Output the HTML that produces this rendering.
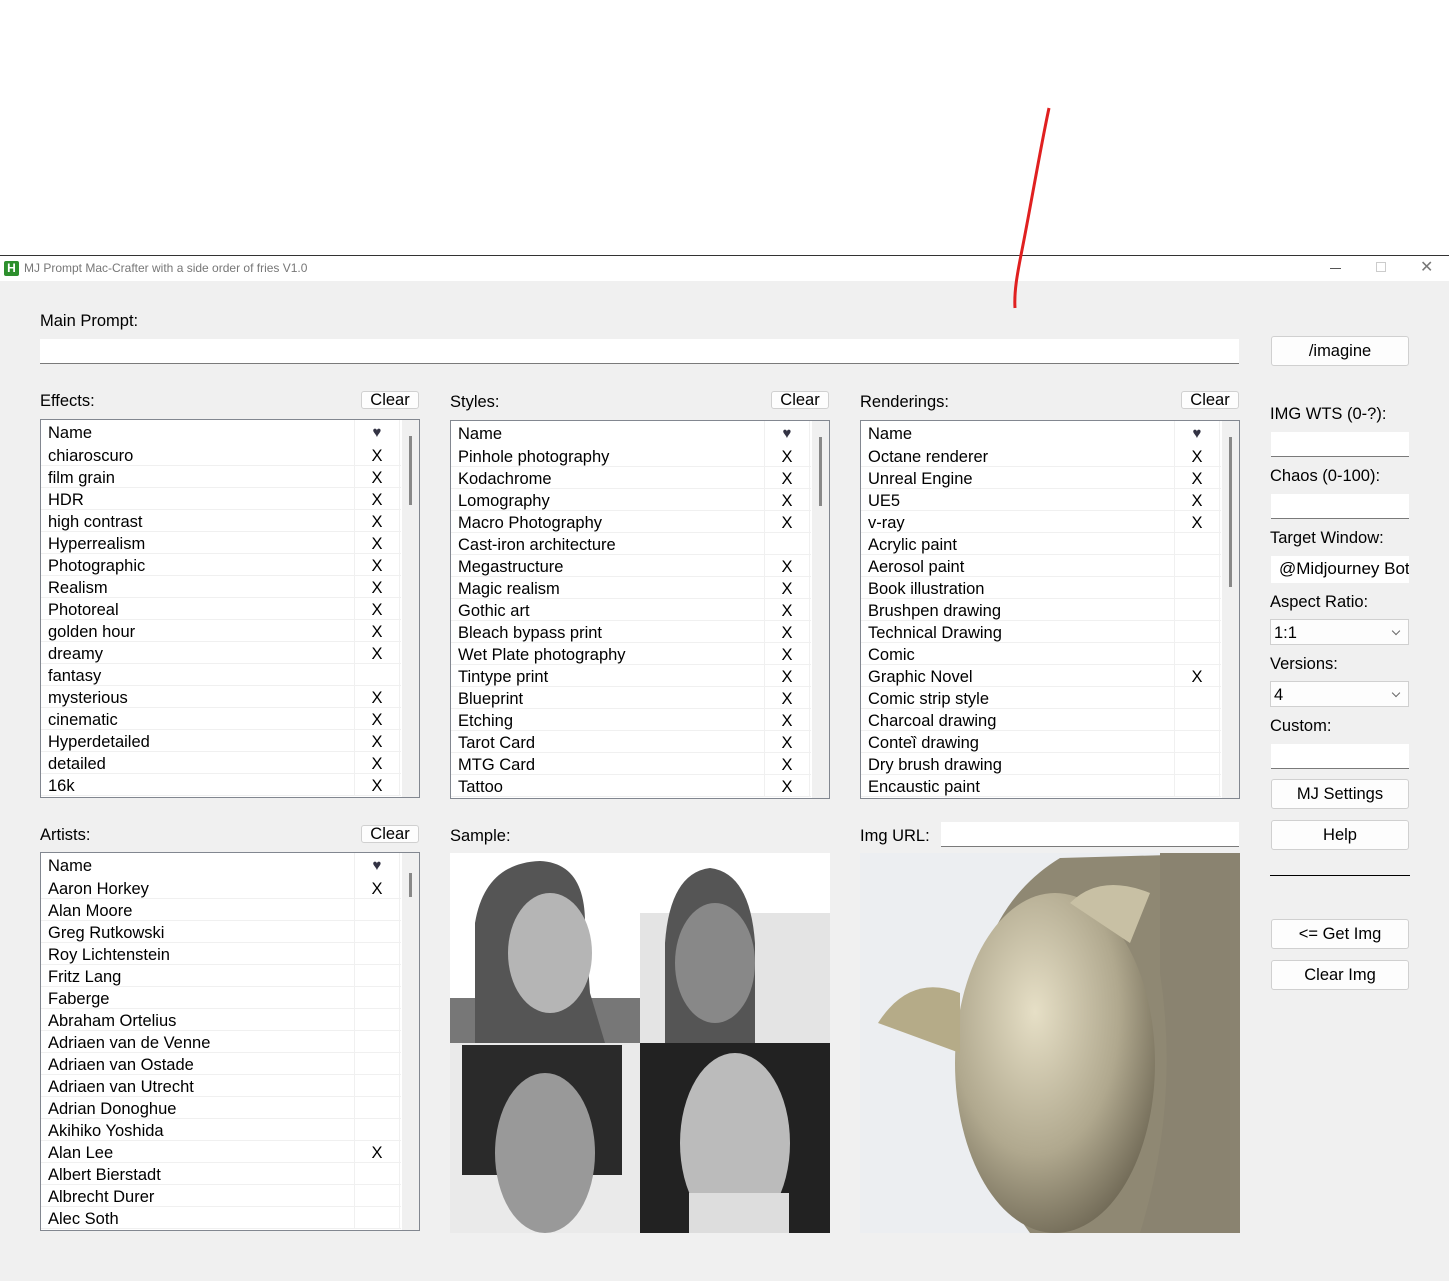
<!DOCTYPE html>
<html><head><meta charset="utf-8"><style>
*{margin:0;padding:0;box-sizing:border-box}
body{width:1449px;height:1281px;position:relative;background:#fff;font-family:"Liberation Sans",sans-serif;font-size:16.5px;color:#000;overflow:hidden}
.a{position:absolute}
.win{left:0;top:255px;width:1449px;height:1026px;border-top:1px solid #333;background:#f0f0f0}
.title{left:0;top:256px;width:1449px;height:25px;background:#fff}
.lbl{position:absolute;font-size:16.5px;line-height:20px;white-space:nowrap}
.btn{position:absolute;background:#fdfdfd;border:1px solid #d0d0d0;border-radius:3px;text-align:center;font-size:16.5px;white-space:nowrap}
.clr{height:18px;width:58px;line-height:16px}
.inp{position:absolute;background:#fff;border-bottom:1px solid #7a7a7a}
.list{position:absolute;width:380px;height:379px;border:1px solid #828790;background:#fff;overflow:hidden}
.list .sb{position:absolute;right:0;top:0;width:17px;height:100%;background:#f0f0f0}
.list .sb i{position:absolute;left:7px;top:16px;width:3px;height:69px;background:#888}
.r{display:flex;height:22px;line-height:24px;width:360px;border-bottom:1px solid #f0f0f0}
.r.h{height:24px;line-height:26px;border-bottom:none}
.n{width:314px;padding-left:7px;border-right:1px solid #f0f0f0;white-space:nowrap;overflow:hidden}
.x{width:45px;text-align:center;border-right:1px solid #f0f0f0}
.h .x{color:#334;font-size:15px}
.sel{position:absolute;background:#fdfdfd;border:1px solid #d0d0d0;height:26px;width:139px;line-height:26px;padding-left:3px}
.sel:after{content:"";position:absolute;right:9px;top:8px;width:5px;height:5px;border-right:1px solid #666;border-bottom:1px solid #666;transform:rotate(45deg)}
</style></head><body>
<div class="a win"></div>
<div class="a title"></div>
<svg class="a" style="left:0;top:0;z-index:5" width="1449" height="320"><path d="M1049 108 C1040 150 1030 210 1022 250 C1017 275 1014 292 1015 308" stroke="#e02020" stroke-width="3" fill="none"/></svg>
<div class="a" style="left:4px;top:261px;width:15px;height:15px;background:#2d8f2d;border-radius:2px;color:#fff;font-size:12px;font-weight:bold;text-align:center;line-height:15px">H</div>
<div class="lbl" style="left:24px;top:259px;font-size:12px;color:#777;line-height:18px">MJ Prompt Mac-Crafter with a side order of fries V1.0</div>
<div class="a" style="left:1330px;top:268px;width:11px;height:1px;background:#555"></div>
<div class="a" style="left:1376px;top:262px;width:10px;height:10px;border:1px solid #ccc"></div>
<div class="lbl" style="left:1420px;top:258px;font-size:16px;color:#777">✕</div>

<div class="lbl" style="left:40px;top:311px">Main Prompt:</div>
<div class="inp" style="left:40px;top:339px;width:1199px;height:25px"></div>
<div class="btn" style="left:1271px;top:336px;width:138px;height:30px;line-height:29px">/imagine</div>

<div class="lbl" style="left:40px;top:391px">Effects:</div>
<div class="btn clr" style="left:361px;top:391px">Clear</div>
<div class="lbl" style="left:450px;top:392px">Styles:</div>
<div class="btn clr" style="left:771px;top:391px">Clear</div>
<div class="lbl" style="left:860px;top:392px">Renderings:</div>
<div class="btn clr" style="left:1181px;top:391px">Clear</div>

<div class="list" style="left:40px;top:419px"><div class="sb"><i></i></div>
<div class="r h"><span class="n">Name</span><span class="x">♥</span></div>
<div class="r"><span class="n">chiaroscuro</span><span class="x">X</span></div>
<div class="r"><span class="n">film grain</span><span class="x">X</span></div>
<div class="r"><span class="n">HDR</span><span class="x">X</span></div>
<div class="r"><span class="n">high contrast</span><span class="x">X</span></div>
<div class="r"><span class="n">Hyperrealism</span><span class="x">X</span></div>
<div class="r"><span class="n">Photographic</span><span class="x">X</span></div>
<div class="r"><span class="n">Realism</span><span class="x">X</span></div>
<div class="r"><span class="n">Photoreal</span><span class="x">X</span></div>
<div class="r"><span class="n">golden hour</span><span class="x">X</span></div>
<div class="r"><span class="n">dreamy</span><span class="x">X</span></div>
<div class="r"><span class="n">fantasy</span><span class="x"></span></div>
<div class="r"><span class="n">mysterious</span><span class="x">X</span></div>
<div class="r"><span class="n">cinematic</span><span class="x">X</span></div>
<div class="r"><span class="n">Hyperdetailed</span><span class="x">X</span></div>
<div class="r"><span class="n">detailed</span><span class="x">X</span></div>
<div class="r"><span class="n">16k</span><span class="x">X</span></div>
</div>

<div class="list" style="left:450px;top:420px"><div class="sb"><i></i></div>
<div class="r h"><span class="n">Name</span><span class="x">♥</span></div>
<div class="r"><span class="n">Pinhole photography</span><span class="x">X</span></div>
<div class="r"><span class="n">Kodachrome</span><span class="x">X</span></div>
<div class="r"><span class="n">Lomography</span><span class="x">X</span></div>
<div class="r"><span class="n">Macro Photography</span><span class="x">X</span></div>
<div class="r"><span class="n">Cast-iron architecture</span><span class="x"></span></div>
<div class="r"><span class="n">Megastructure</span><span class="x">X</span></div>
<div class="r"><span class="n">Magic realism</span><span class="x">X</span></div>
<div class="r"><span class="n">Gothic art</span><span class="x">X</span></div>
<div class="r"><span class="n">Bleach bypass print</span><span class="x">X</span></div>
<div class="r"><span class="n">Wet Plate photography</span><span class="x">X</span></div>
<div class="r"><span class="n">Tintype print</span><span class="x">X</span></div>
<div class="r"><span class="n">Blueprint</span><span class="x">X</span></div>
<div class="r"><span class="n">Etching</span><span class="x">X</span></div>
<div class="r"><span class="n">Tarot Card</span><span class="x">X</span></div>
<div class="r"><span class="n">MTG Card</span><span class="x">X</span></div>
<div class="r"><span class="n">Tattoo</span><span class="x">X</span></div>
</div>

<div class="list" style="left:860px;top:420px"><div class="sb"><i style="height:150px"></i></div>
<div class="r h"><span class="n">Name</span><span class="x">♥</span></div>
<div class="r"><span class="n">Octane renderer</span><span class="x">X</span></div>
<div class="r"><span class="n">Unreal Engine</span><span class="x">X</span></div>
<div class="r"><span class="n">UE5</span><span class="x">X</span></div>
<div class="r"><span class="n">v-ray</span><span class="x">X</span></div>
<div class="r"><span class="n">Acrylic paint</span><span class="x"></span></div>
<div class="r"><span class="n">Aerosol paint</span><span class="x"></span></div>
<div class="r"><span class="n">Book illustration</span><span class="x"></span></div>
<div class="r"><span class="n">Brushpen drawing</span><span class="x"></span></div>
<div class="r"><span class="n">Technical Drawing</span><span class="x"></span></div>
<div class="r"><span class="n">Comic</span><span class="x"></span></div>
<div class="r"><span class="n">Graphic Novel</span><span class="x">X</span></div>
<div class="r"><span class="n">Comic strip style</span><span class="x"></span></div>
<div class="r"><span class="n">Charcoal drawing</span><span class="x"></span></div>
<div class="r"><span class="n">Conteȉ drawing</span><span class="x"></span></div>
<div class="r"><span class="n">Dry brush drawing</span><span class="x"></span></div>
<div class="r"><span class="n">Encaustic paint</span><span class="x"></span></div>
</div>

<div class="lbl" style="left:40px;top:825px">Artists:</div>
<div class="btn clr" style="left:361px;top:825px">Clear</div>
<div class="list" style="left:40px;top:852px"><div class="sb"><i style="height:24px;top:20px"></i></div>
<div class="r h"><span class="n">Name</span><span class="x">♥</span></div>
<div class="r"><span class="n">Aaron Horkey</span><span class="x">X</span></div>
<div class="r"><span class="n">Alan Moore</span><span class="x"></span></div>
<div class="r"><span class="n">Greg Rutkowski</span><span class="x"></span></div>
<div class="r"><span class="n">Roy Lichtenstein</span><span class="x"></span></div>
<div class="r"><span class="n">Fritz Lang</span><span class="x"></span></div>
<div class="r"><span class="n">Faberge</span><span class="x"></span></div>
<div class="r"><span class="n">Abraham Ortelius</span><span class="x"></span></div>
<div class="r"><span class="n">Adriaen van de Venne</span><span class="x"></span></div>
<div class="r"><span class="n">Adriaen van Ostade</span><span class="x"></span></div>
<div class="r"><span class="n">Adriaen van Utrecht</span><span class="x"></span></div>
<div class="r"><span class="n">Adrian Donoghue</span><span class="x"></span></div>
<div class="r"><span class="n">Akihiko Yoshida</span><span class="x"></span></div>
<div class="r"><span class="n">Alan Lee</span><span class="x">X</span></div>
<div class="r"><span class="n">Albert Bierstadt</span><span class="x"></span></div>
<div class="r"><span class="n">Albrecht Durer</span><span class="x"></span></div>
<div class="r"><span class="n">Alec Soth</span><span class="x"></span></div>
</div>

<div class="lbl" style="left:450px;top:826px">Sample:</div>
<svg class="a" style="left:450px;top:853px" width="380" height="380">
<rect width="380" height="380" fill="#fff"/>
<rect x="0" y="145" width="190" height="45" fill="#777"/>
<path d="M25 190 L25 70 Q35 10 90 8 Q135 10 135 70 L140 140 L155 190 Z" fill="#555"/>
<ellipse cx="100" cy="100" rx="42" ry="60" fill="#b5b5b5"/>
<rect x="190" y="60" width="190" height="130" fill="#e4e4e4"/>
<path d="M215 190 L215 90 Q220 20 260 15 Q300 20 305 90 L305 190 Z" fill="#555"/>
<ellipse cx="265" cy="110" rx="40" ry="60" fill="#888"/>
<rect x="0" y="190" width="190" height="190" fill="#eaeaea"/>
<rect x="12" y="192" width="160" height="130" fill="#2a2a2a"/>
<ellipse cx="95" cy="300" rx="50" ry="80" fill="#999"/>
<rect x="190" y="190" width="190" height="190" fill="#222"/>
<ellipse cx="285" cy="290" rx="55" ry="90" fill="#bbb"/>
<rect x="239" y="340" width="100" height="40" fill="#ddd"/>
</svg>

<div class="lbl" style="left:860px;top:826px">Img URL:</div>
<div class="inp" style="left:941px;top:822px;width:298px;height:25px"></div>
<svg class="a" style="left:860px;top:853px" width="380" height="380">
<defs><radialGradient id="f" cx="0.4" cy="0.35" r="0.7"><stop offset="0" stop-color="#e6dfc6"/><stop offset="0.6" stop-color="#b0a88e"/><stop offset="1" stop-color="#6e6754"/></radialGradient></defs>
<rect width="380" height="380" fill="#eceef1"/>
<path d="M170 380 Q110 300 110 200 Q110 60 200 5 L380 0 L380 380 Z" fill="#8f8873"/>
<ellipse cx="195" cy="210" rx="100" ry="170" fill="url(#f)"/>
<path d="M300 0 L380 0 L380 380 L280 380 Q320 250 300 120 Z" fill="#8a8370"/>
<path d="M18 170 Q50 120 100 140 L100 200 Z" fill="#b5ab88"/>
<path d="M210 50 Q240 20 290 40 L270 90 Z" fill="#c8c0a4"/>
</svg>

<div class="lbl" style="left:1270px;top:404px">IMG WTS (0-?):</div>
<div class="inp" style="left:1271px;top:432px;width:138px;height:25px"></div>
<div class="lbl" style="left:1270px;top:466px">Chaos (0-100):</div>
<div class="inp" style="left:1271px;top:494px;width:138px;height:25px"></div>
<div class="lbl" style="left:1270px;top:528px">Target Window:</div>
<div class="inp" style="left:1271px;top:556px;width:138px;height:27px;border:none;padding-left:8px;line-height:25px;overflow:hidden;white-space:nowrap;font-size:17px">@Midjourney Bot</div>
<div class="lbl" style="left:1270px;top:592px">Aspect Ratio:</div>
<div class="sel" style="left:1270px;top:619px">1:1</div>
<div class="lbl" style="left:1270px;top:654px">Versions:</div>
<div class="sel" style="left:1270px;top:681px">4</div>
<div class="lbl" style="left:1270px;top:716px">Custom:</div>
<div class="inp" style="left:1271px;top:744px;width:138px;height:25px"></div>
<div class="btn" style="left:1271px;top:779px;width:138px;height:30px;line-height:29px">MJ Settings</div>
<div class="btn" style="left:1271px;top:820px;width:138px;height:30px;line-height:29px">Help</div>
<div class="a" style="left:1270px;top:875px;width:140px;height:1px;background:#000"></div>
<div class="btn" style="left:1271px;top:919px;width:138px;height:30px;line-height:29px">&lt;= Get Img</div>
<div class="btn" style="left:1271px;top:960px;width:138px;height:30px;line-height:29px">Clear Img</div>
</body></html>
